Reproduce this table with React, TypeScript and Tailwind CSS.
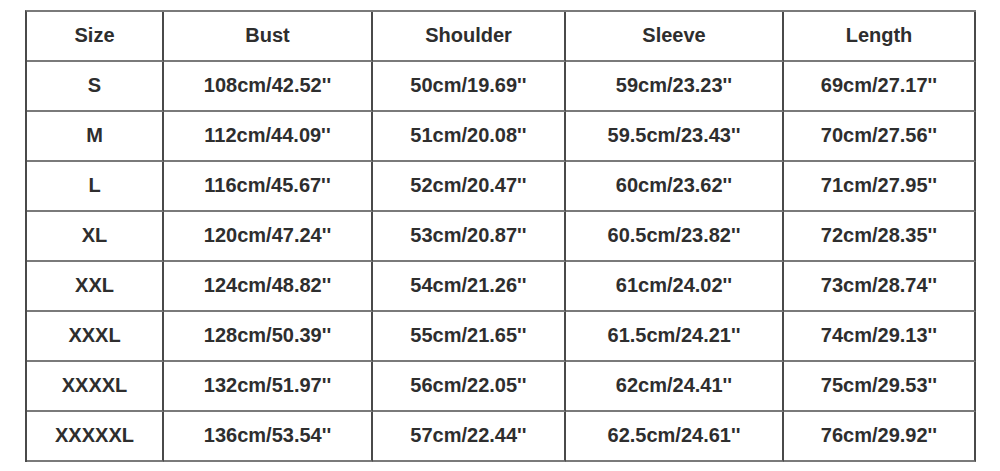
const header = ["Size", "Bust", "Shoulder", "Sleeve", "Length"];

const rows = [
  ["S", "108cm/42.52''", "50cm/19.69''", "59cm/23.23''", "69cm/27.17''"],
  ["M", "112cm/44.09''", "51cm/20.08''", "59.5cm/23.43''", "70cm/27.56''"],
  ["L", "116cm/45.67''", "52cm/20.47''", "60cm/23.62''", "71cm/27.95''"],
  ["XL", "120cm/47.24''", "53cm/20.87''", "60.5cm/23.82''", "72cm/28.35''"],
  ["XXL", "124cm/48.82''", "54cm/21.26''", "61cm/24.02''", "73cm/28.74''"],
  ["XXXL", "128cm/50.39''", "55cm/21.65''", "61.5cm/24.21''", "74cm/29.13''"],
  ["XXXXL", "132cm/51.97''", "56cm/22.05''", "62cm/24.41''", "75cm/29.53''"],
  ["XXXXXL", "136cm/53.54''", "57cm/22.44''", "62.5cm/24.61''", "76cm/29.92''"],
];

function Cell({ text }: { text: string }) {
  return (
    <div className="flex h-[50px] items-center justify-center border-r-2 border-b-2 border-r-[#4a4a4a] border-b-[#7a7a7a] pb-[3px] text-[20px] font-bold text-[#2e2e2e]">
      {text}
    </div>
  );
}

export default function App() {
  return (
    <div className="h-[471px] w-[1000px] bg-white pt-[10px] pl-[25px] font-['Liberation_Sans',Arial,sans-serif]">
      <div className="grid w-fit grid-cols-[137px_209px_193px_218px_192px] border-t-2 border-l-2 border-t-[#7a7a7a] border-l-[#4a4a4a]">
        {header.map((h) => (
          <Cell key={h} text={h} />
        ))}
        {rows.map((r) => r.map((c, i) => <Cell key={r[0] + i} text={c} />))}
      </div>
    </div>
  );
}
